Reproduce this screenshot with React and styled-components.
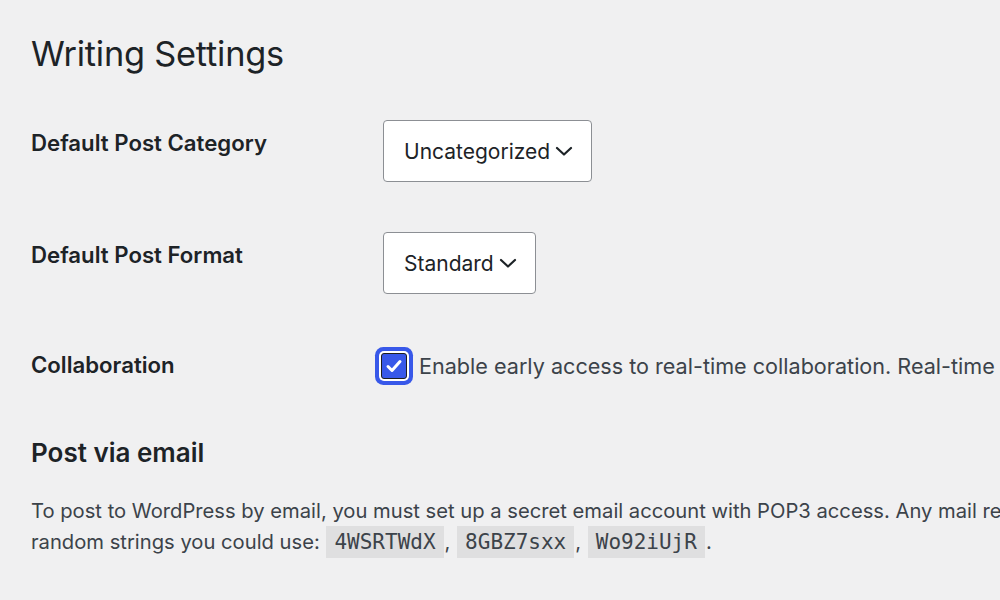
import React from 'react';
import styled, { createGlobalStyle } from 'styled-components';

const GlobalStyle = createGlobalStyle`
  html, body {
    margin: 0;
    padding: 0;
    background: #f0f0f1;
    overflow: hidden;
  }
  body {
    font-family: "Inter", "Liberation Sans", sans-serif;
    color: #1d2327;
  }
`;

const Wrap = styled.div`
  padding: 32px 0 0 31px;
  width: 1400px;
`;

const Title = styled.h1`
  margin: 0 0 19px;
  font-size: 34.3px;
  font-weight: 400;
  line-height: 44px;
  color: #1d2327;
  letter-spacing: -0.2px;
`;

const Row = styled.div`
  display: grid;
  grid-template-columns: 352px 1fr;
  align-items: ${props => props.center ? 'center' : 'start'};
  padding: 25px 0;
`;

const Label = styled.div`
  font-size: 22.2px;
  font-weight: 600;
  line-height: 28px;
  padding-top: ${props => props.center ? '0' : '9px'};
  color: #1d2327;
`;

const SelectBox = styled.div`
  display: inline-flex;
  align-items: center;
  gap: 5px;
  justify-self: start;
  box-sizing: border-box;
  height: 62px;
  padding: 0 18px 0 20px;
  background: #fff;
  border: 1px solid #8c8f94;
  border-radius: 4px;
  font-size: 21px;
  color: #1d2327;
`;

const CheckLine = styled.label`
  display: flex;
  align-items: center;
  gap: 12px;
  margin-left: -2px;
  white-space: nowrap;
  font-size: 21.6px;
  color: #3c434a;
  padding-top: 3px;
`;

const CheckBox = styled.span`
  display: inline-flex;
  align-items: center;
  justify-content: center;
  flex: none;
  box-sizing: border-box;
  width: 26px;
  height: 26px;
  margin: 6px 0;
  background: #3858e9;
  border: 1.5px solid #1e1e1e;
  border-radius: 3px;
  box-shadow: 0 0 0 2px #fff, 0 0 0 6px #3858e9;
`;

const SubTitle = styled.h2`
  margin: 26px 0 26px;
  font-size: 26px;
  font-weight: 600;
  line-height: 34px;
  color: #1d2327;
`;

const Para = styled.p`
  margin: 0;
  font-size: 20.2px;
  line-height: 30px;
  color: #3c434a;
  white-space: nowrap;
`;

const Code = styled.code`
  display: inline-block;
  padding: 0 8px;
  margin: 0 1px;
  line-height: 32px;
  background: rgba(0, 0, 0, 0.07);
  font-family: "DejaVu Sans Mono", "Liberation Mono", monospace;
  font-size: 21px;
  color: #3c434a;
`;

const Chevron = () => (
  <svg width="18" height="10" viewBox="0 0 18 10" fill="none">
    <path d="M2 2l7 6.5L16 2" stroke="#1d2327" strokeWidth="2.2" strokeLinecap="round" strokeLinejoin="round" />
  </svg>
);

const Check = () => (
  <svg width="20" height="20" viewBox="0 0 20 20" fill="none">
    <path d="M4 10.5l4 4L16 5.5" stroke="#fff" strokeWidth="3" strokeLinecap="round" strokeLinejoin="round" />
  </svg>
);

const Select = ({ value }) => (
  <SelectBox>
    <span>{value}</span>
    <Chevron />
  </SelectBox>
);

export default function App() {
  const codes = ['4WSRTWdX', '8GBZ7sxx', 'Wo92iUjR'];
  return (
    <Wrap>
      <GlobalStyle />
      <Title>Writing Settings</Title>
      <Row>
        <Label>Default Post Category</Label>
        <Select value="Uncategorized" />
      </Row>
      <Row>
        <Label>Default Post Format</Label>
        <Select value="Standard" />
      </Row>
      <Row center>
        <Label center>Collaboration</Label>
        <CheckLine>
          <CheckBox><Check /></CheckBox>
          Enable early access to real-time collaboration. Real-time collaboration may affect your website’s performance.
        </CheckLine>
      </Row>
      <SubTitle>Post via email</SubTitle>
      <Para>
        To post to WordPress by email, you must set up a secret email account with POP3 access. Any mail received at this address will be posted, so it’s a good idea to keep this address very secret. Here are three
        <br />
        random strings you could use: <Code>{codes[0]}</Code>, <Code>{codes[1]}</Code>, <Code>{codes[2]}</Code>.
      </Para>
    </Wrap>
  );
}
